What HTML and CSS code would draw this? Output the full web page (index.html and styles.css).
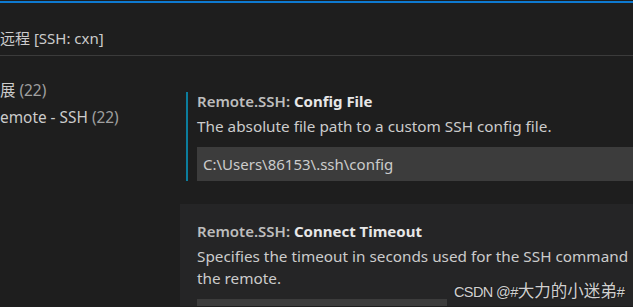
FILE: index.html
```html
<!DOCTYPE html>
<html lang="zh-CN">
<head>
  <meta charset="UTF-8">
  <title>设置 - 远程 [SSH: cxn]</title>
  <link rel="stylesheet" href="styles.css">
</head>
<body>

  <div class="faixa-topo"></div>

  <div class="cabecalho">远程 [SSH: cxn]</div>

  <div class="principal">
    <!-- Índice à esquerda -->
    <ul class="indice">
      <li>展 <span class="contagem">(22)</span></li>
      <li>emote - SSH <span class="contagem">(22)</span></li>
    </ul>

    <!-- Lista de configurações -->
    <div class="configuracoes">
      <div class="item">
        <div class="item-corpo modificado">
          <div class="item-titulo"><span class="categoria">Remote.SSH: </span><span class="chave">Config File</span></div>
          <div class="item-descricao">The absolute file path to a custom SSH config file.</div>
          <div class="campo">C:\Users\86153\.ssh\config</div>
        </div>
      </div>

      <div class="item item-hover">
        <div class="item-corpo">
          <div class="item-titulo"><span class="categoria">Remote.SSH: </span><span class="chave">Connect Timeout</span></div>
          <div class="item-descricao">Specifies the timeout in seconds used for the SSH command<br>the remote.</div>
          <div class="campo campo-curto"></div>
        </div>
      </div>
    </div>
  </div>

  <div class="marca-dagua"><span class="marca-latim">CSDN @#</span><span class="marca-cjk">大力的小迷弟</span><span class="marca-latim">#</span></div>

</body>
</html>
```

FILE: styles.css
```css
:root {
  --fundo: #1e1e1e;
  --fundo-hover: #252526;
  --azul: #0e7ad0;
  --azul-modificado: #0c7d9d;
  --linha: #3b3b3b;
  --campo: #3c3c3c;
  --texto: #cccccc;
  --texto-claro: #e7e7e7;
  --texto-fraco: #a0a0a0;
}

html, body {
  margin: 0;
  padding: 0;
  overflow: hidden;
}

body {
  width: 633px;
  height: 307px;
  position: relative;
  background-color: var(--fundo);
  color: var(--texto);
  font-family: 'Noto Sans', 'Noto Sans CJK SC', sans-serif;
  font-size: 15px;
}

.faixa-topo {
  margin-top: 1px;
  height: 2px;
  background-color: var(--azul);
}

.cabecalho {
  height: 53px;
  box-sizing: border-box;
  padding-top: 24px;
  line-height: 22px;
  font-size: 15px;
  color: var(--texto);
  border-bottom: 1px solid var(--linha);
}

.principal {
  display: flex;
  height: 250px;
  overflow: hidden;
}

.indice {
  list-style: none;
  margin: 0;
  padding: 21px 0 0 0;
  width: 180px;
  flex-shrink: 0;
}

.indice li {
  height: 27px;
  line-height: 27px;
  font-size: 15.4px;
  white-space: nowrap;
}

.contagem {
  color: var(--texto-fraco);
}

.configuracoes {
  flex: 1;
  padding-top: 18px;
  min-width: 0;
}

.item {
  padding: 18px 0 23px 6px;
}

.item-hover {
  background-color: var(--fundo-hover);
}

.item-corpo {
  border-left: 2px solid transparent;
  padding-left: 9px;
}

.item-corpo.modificado {
  border-left-color: var(--azul-modificado);
}

.item-titulo {
  line-height: 18px;
  font-weight: 600;
  white-space: nowrap;
}

.categoria {
  color: #bdbdbd;
}

.chave {
  color: var(--texto-claro);
  font-weight: 700;
}

.item-descricao {
  margin-top: 5px;
  line-height: 22px;
  font-size: 15.3px;
  white-space: nowrap;
}

.campo {
  margin-top: 10px;
  height: 34px;
  line-height: 34px;
  box-sizing: border-box;
  padding-left: 6px;
  background-color: var(--campo);
  color: var(--texto);
  white-space: nowrap;
}

.campo-curto {
  width: 250px;
}

.marca-dagua {
  position: absolute;
  left: 454px;
  top: 279px;
  white-space: nowrap;
  line-height: 22px;
  color: #d0d0d0;
  text-shadow: 0 0 2px rgba(0, 0, 0, 0.5);
}

.marca-latim {
  font-family: 'Liberation Sans', sans-serif;
  font-size: 14.5px;
  letter-spacing: -0.6px;
}

.marca-cjk {
  font-family: 'Noto Sans CJK SC', sans-serif;
  font-size: 16.5px;
}
```
